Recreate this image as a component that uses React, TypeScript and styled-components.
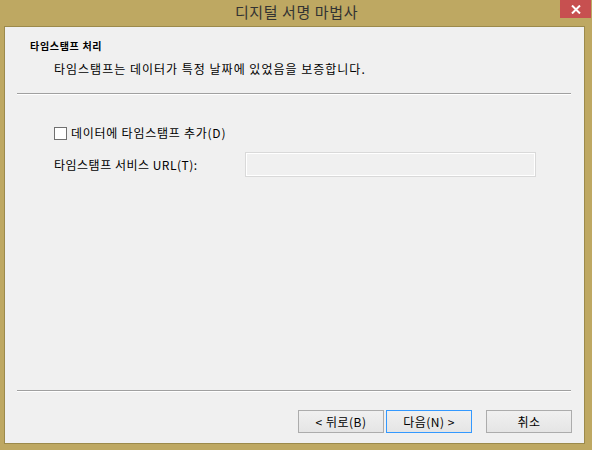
import React from 'react';
import styled, { createGlobalStyle } from 'styled-components';

const GlobalStyle = createGlobalStyle`
  html, body {
    margin: 0;
    padding: 0;
    background: #bea862;
  }
  body {
    font-family: "Noto Sans CJK KR", "Noto Sans", sans-serif;
    color: #000;
  }
`;

const Window = styled.div`
  width: 592px;
  height: 450px;
  box-sizing: border-box;
  background: #bea862;
  display: flex;
  flex-direction: column;
  padding: 0 7px 6px 4px;
`;

const TitleBar = styled.div`
  height: 26px;
  flex: none;
  position: relative;
  display: flex;
  align-items: center;
  justify-content: center;
`;

const Title = styled.div`
  font-size: 15px;
  line-height: 20px;
  color: #333;
  letter-spacing: 0.6px;
  margin-top: -2px;
  margin-left: 4px;
`;

const CloseButton = styled.div`
  position: absolute;
  top: 0;
  right: -6px;
  width: 31px;
  height: 18px;
  background: #c75050;
  display: flex;
  align-items: center;
  justify-content: center;
`;

const Client = styled.div`
  flex: 1;
  background: #f0f0f0;
  border: 1px solid #9c8a4b;
  display: flex;
  flex-direction: column;
`;

const Header = styled.div`
  padding: 12px 0 0 25px;
`;

const HeaderTitle = styled.div`
  font-size: 10px;
  font-weight: bold;
  line-height: 14px;
  letter-spacing: 0.7px;
`;

const HeaderText = styled.div`
  font-size: 12px;
  line-height: 16px;
  letter-spacing: 1px;
  margin: 8px 0 0 24px;
`;

const Separator = styled.div<{ $top: number }>`
  margin: ${(p) => p.$top}px 13px 0 12px;
  border-top: 1px solid #a0a0a0;
  border-bottom: 1px solid #fff;
`;

const Body = styled.div`
  flex: 1;
  display: flex;
  flex-direction: column;
  padding: 30px 0 0 49px;
  font-size: 12px;
  letter-spacing: 0.75px;
`;

const CheckRow = styled.label`
  display: flex;
  align-items: center;
  height: 16px;
  line-height: 16px;
`;

const CheckBox = styled.span`
  width: 11px;
  height: 11px;
  border: 1px solid #707070;
  background: #fff;
  margin-right: 4px;
`;

const FieldRow = styled.div`
  display: flex;
  align-items: center;
  margin-top: 11px;
`;

const FieldLabel = styled.span`
  width: 191px;
  line-height: 16px;
  letter-spacing: 0.5px;
`;

const TextBox = styled.div`
  width: 289px;
  height: 23px;
  border: 1px solid #d9d9d9;
  box-shadow: inset 0 0 0 1px #fff;
  background: #f0f0f0;
`;

const Footer = styled.div`
  display: flex;
  justify-content: flex-end;
  padding: 18px 12px 10px 0;
`;

const Button = styled.div<{ $default?: boolean; $gap?: number }>`
  width: 84px;
  height: 21px;
  margin-left: ${(p) => p.$gap ?? 0}px;
  border: 1px solid ${(p) => (p.$default ? '#3399ff' : '#acacac')};
  background: linear-gradient(#f0f0f0, #e5e5e5);
  font-size: 12px;
  line-height: 21px;
  letter-spacing: 0.5px;
  text-align: center;
`;

export default function App() {
  return (
    <>
      <GlobalStyle />
      <Window>
        <TitleBar>
          <Title>디지털 서명 마법사</Title>
          <CloseButton>
            <svg width="10" height="9" viewBox="0 0 10 9">
              <path d="M1 0.5 L9 8.5 M9 0.5 L1 8.5" stroke="#fff" strokeWidth="2" />
            </svg>
          </CloseButton>
        </TitleBar>
        <Client>
          <Header>
            <HeaderTitle>타임스탬프 처리</HeaderTitle>
            <HeaderText>타임스탬프는 데이터가 특정 날짜에 있었음을 보증합니다.</HeaderText>
          </Header>
          <Separator $top={16} />
          <Body>
            <CheckRow>
              <CheckBox />
              데이터에 타임스탬프 추가(D)
            </CheckRow>
            <FieldRow>
              <FieldLabel>타임스탬프 서비스 URL(T):</FieldLabel>
              <TextBox />
            </FieldRow>
          </Body>
          <Separator $top={0} />
          <Footer>
            <Button>&lt; 뒤로(B)</Button>
            <Button $default $gap={2}>다음(N) &gt;</Button>
            <Button $gap={14}>취소</Button>
          </Footer>
        </Client>
      </Window>
    </>
  );
}
